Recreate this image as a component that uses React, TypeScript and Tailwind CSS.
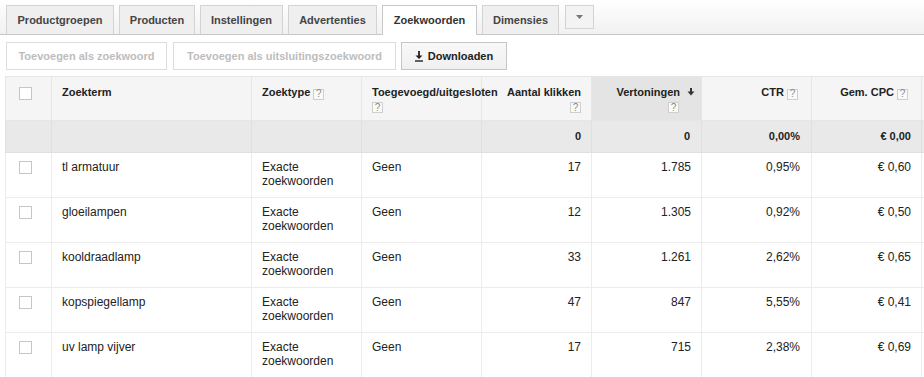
import React from "react";

// ============================================================================
// DATA
// ============================================================================

// label + measured width of each tab
const TABS: { label: string; w: string }[] = [
  { label: "Productgroepen", w: "w-[108px]" },
  { label: "Producten", w: "w-[76px]" },
  { label: "Instellingen", w: "w-[83px]" },
  { label: "Advertenties", w: "w-[89px]" },
  { label: "Zoekwoorden", w: "w-[95px]" },
  { label: "Dimensies", w: "w-[77px]" },
];

const ACTIVE_TAB = "Zoekwoorden";

interface Row {
  term: string;
  clicks: number;
  impressions: string;
  ctr: string;
  cpc: string;
}

const ROWS: Row[] = [
  { term: "tl armatuur", clicks: 17, impressions: "1.785", ctr: "0,95%", cpc: "€ 0,60" },
  { term: "gloeilampen", clicks: 12, impressions: "1.305", ctr: "0,92%", cpc: "€ 0,50" },
  { term: "kooldraadlamp", clicks: 33, impressions: "1.261", ctr: "2,62%", cpc: "€ 0,65" },
  { term: "kopspiegellamp", clicks: 47, impressions: "847", ctr: "5,55%", cpc: "€ 0,41" },
  { term: "uv lamp vijver", clicks: 17, impressions: "715", ctr: "2,38%", cpc: "€ 0,69" },
];

// ============================================================================
// SMALL PIECES
// ============================================================================

function Help({ className = "" }: { className?: string }) {
  return (
    <span
      className={`inline-flex h-[11px] w-[11px] items-center justify-center border border-[#cfcfcf] bg-[#fafafa] align-[-1px] text-[10px] leading-none font-normal text-[#8a8a8a] ${className}`}
    >
      ?
    </span>
  );
}

function Checkbox() {
  return <span className="block h-[13px] w-[13px] border border-[#c6c6c6] bg-white" />;
}

function SortArrow() {
  return (
    <svg width="8" height="8" viewBox="0 0 8 8" className="ml-[7px] inline-block align-[0px]">
      <path d="M4 0v5" stroke="#333" strokeWidth="2" />
      <path d="M0.5 3.4 4 7.6 7.5 3.4z" fill="#333" />
    </svg>
  );
}

function DownloadIcon() {
  return (
    <svg width="8" height="11" viewBox="0 0 8 11" className="mr-[5px]">
      <path d="M4 0v6" stroke="#222" strokeWidth="1.8" />
      <path d="M0.5 4.5 4 8 7.5 4.5z" fill="#222" />
      <path d="M0 10h8" stroke="#222" strokeWidth="1.4" />
    </svg>
  );
}

// ============================================================================
// APP
// ============================================================================

export default function App() {
  const th = "border border-[#e6e6e6] align-top pt-[9px] font-bold text-[11px] leading-[13px] text-[#222]";
  const td = "border border-[#ececec] align-top pt-[7px] text-[12px] leading-[14px] text-[#222]";
  const sum = "border border-[#e0e0e0] bg-[#e9e9e9] align-middle font-bold text-[11px] text-[#222]";

  return (
    <div
      className="w-[924px] h-[377px] overflow-hidden bg-white"
      style={{ fontFamily: '"Liberation Sans", Arial, sans-serif' }}
    >
      {/* tabs */}
      <div className="flex h-[35px] items-end gap-[5px] border-b border-[#c8c8c8] bg-gradient-to-b from-white to-[#f1f1f1] pl-[6px]">
        {TABS.map((t) =>
          t.label === ACTIVE_TAB ? (
            <div
              key={t.label}
              className={`relative z-10 -mb-px flex h-[30px] ${t.w} items-center justify-center border border-b-0 border-[#c8c8c8] bg-white pb-px text-[11px] font-bold text-[#333]`}
            >
              {t.label}
            </div>
          ) : (
            <div
              key={t.label}
              className={`flex h-[29px] ${t.w} items-center justify-center border border-b-0 border-[#d3d3d3] bg-[#efefef] text-[11px] font-bold text-[#444]`}
            >
              {t.label}
            </div>
          )
        )}
        <div className="mb-[5px] ml-px flex h-[24px] w-[29px] items-center justify-center self-end border border-[#d3d3d3] bg-[#f3f3f3]">
          <svg width="7" height="4" viewBox="0 0 7 4">
            <path d="M0 0h7L3.5 4z" fill="#777" />
          </svg>
        </div>
      </div>

      {/* toolbar */}
      <div className="mt-[7px] flex gap-[6px] pl-[6px]">
        <button className="h-[28px] w-[161px] border border-[#dcdcdc] bg-white text-[11px] font-bold text-[#bdbdbd]">
          Toevoegen als zoekwoord
        </button>
        <button className="h-[28px] w-[223px] border border-[#dcdcdc] bg-white text-[11px] font-bold text-[#bdbdbd]">
          Toevoegen als uitsluitingszoekwoord
        </button>
        <button className="-ml-px flex h-[28px] w-[106px] items-center justify-center border border-[#c6c6c6] bg-gradient-to-b from-[#f8f8f8] to-[#f0f0f0] text-[11px] font-bold text-[#222]">
          <DownloadIcon />
          Downloaden
        </button>
      </div>

      {/* table */}
      <div className="mt-[6px] ml-[5px]">
        <table className="table-fixed border-collapse" style={{ width: 956 }}>
          <colgroup>
            <col style={{ width: 46 }} />
            <col style={{ width: 200 }} />
            <col style={{ width: 110 }} />
            <col style={{ width: 120 }} />
            <col style={{ width: 110 }} />
            <col style={{ width: 110 }} />
            <col style={{ width: 110 }} />
            <col style={{ width: 110 }} />
            <col style={{ width: 40 }} />
          </colgroup>
          <thead>
            <tr className="h-[44px] bg-[#f5f5f5]">
              <th className={`${th} pl-[13px] pt-[10px]`}>
                <Checkbox />
              </th>
              <th className={`${th} pl-[10px] text-left`}>Zoekterm</th>
              <th className={`${th} pl-[10px] text-left`}>
                Zoektype <Help />
              </th>
              <th className={`${th} pl-[10px] text-left`}>
                Toegevoegd/uitgesloten
                <br />
                <Help className="mt-[3px]" />
              </th>
              <th className={`${th} pr-[10px] text-right`}>
                Aantal klikken
                <br />
                <Help className="mt-[3px]" />
              </th>
              <th className={`${th} bg-[#e4e4e4] pr-[6px] text-right`}>
                Vertoningen
                <SortArrow />
                <br />
                <Help className="mt-[3px] mr-[16px]" />
              </th>
              <th className={`${th} pr-[13px] text-right`}>
                CTR <Help />
              </th>
              <th className={`${th} pr-[13px] text-right`}>
                Gem. CPC <Help />
              </th>
              <th className={th} />
            </tr>
          </thead>
          <tbody>
            <tr className="h-[32px]">
              <td className={sum} />
              <td className={sum} />
              <td className={sum} />
              <td className={sum} />
              <td className={`${sum} pr-[10px] text-right`}>0</td>
              <td className={`${sum} pr-[11px] text-right`}>0</td>
              <td className={`${sum} pr-[11px] text-right`}>0,00%</td>
              <td className={`${sum} pr-[10px] text-right`}>€ 0,00</td>
              <td className={sum} />
            </tr>
            {ROWS.map((r) => (
              <tr key={r.term} className="h-[45px]">
                <td className={`${td} pl-[13px] pt-[8px]`}>
                  <Checkbox />
                </td>
                <td className={`${td} pl-[10px]`}>{r.term}</td>
                <td className={`${td} pl-[10px] pr-[8px]`}>Exacte zoekwoorden</td>
                <td className={`${td} pl-[10px]`}>Geen</td>
                <td className={`${td} pr-[10px] text-right`}>{r.clicks}</td>
                <td className={`${td} pr-[10px] text-right`}>{r.impressions}</td>
                <td className={`${td} pr-[11px] text-right`}>{r.ctr}</td>
                <td className={`${td} pr-[10px] text-right`}>{r.cpc}</td>
                <td className={td} />
              </tr>
            ))}
          </tbody>
        </table>
      </div>
    </div>
  );
}
